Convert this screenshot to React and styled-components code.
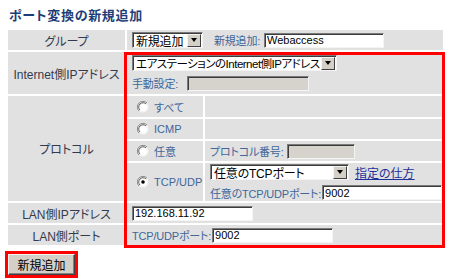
import React from 'react';
import styled, { createGlobalStyle } from 'styled-components';

const GlobalStyle = createGlobalStyle`
  body {
    margin: 0;
    background: #fff;
    font-family: "Liberation Sans", "Noto Sans CJK JP", sans-serif;
    font-feature-settings: "palt";
  }
`;

const Page = styled.div`
  padding: 8px 0 0 8px;
  width: 450px;
  height: 279px;
  box-sizing: border-box;
  overflow: hidden;
`;

const Title = styled.h1`
  margin: 0 0 6px 1px;
  font-size: 13px;
  line-height: 16px;
  font-weight: bold;
  letter-spacing: 0.7px;
  color: #1d3d78;
`;

const FormGrid = styled.div`
  display: grid;
  grid-template-columns: 117px 316px;
  grid-template-rows: 20px 42px 105px 20px 20px;
  gap: 2px;
`;

const Label = styled.div`
  grid-column: 1;
  grid-row: ${(p) => p.$row};
  background: #e1e1e1;
  display: flex;
  align-items: center;
  justify-content: center;
  font-size: 12px;
  color: #343b4c;
`;

const Cell = styled.div`
  grid-column: ${(p) => (p.$row ? 2 : 'auto')};
  grid-row: ${(p) => p.$row || 'auto'};
  background: #e1e1e1;
  display: flex;
  flex-direction: ${(p) => (p.$stack ? 'column' : 'row')};
  align-items: ${(p) => (p.$stack ? 'flex-start' : 'center')};
  justify-content: ${(p) => (p.$stack ? 'center' : 'flex-start')};
  gap: ${(p) => (p.$stack ? '4px' : '0')};
  padding: 0 4px 0 5px;
  font-size: 11px;
  color: #40669a;
`;

const Line = styled.div`
  display: flex;
  align-items: center;
`;

const Caption = styled.span`
  margin: ${(p) => p.$margin || '0'};
  white-space: nowrap;
  letter-spacing: -0.2px;
`;

const TextInput = styled.input`
  box-sizing: border-box;
  width: ${(p) => p.$w}px;
  height: 15px;
  padding: 0 2px;
  font-family: "Liberation Sans", "Noto Sans CJK JP", sans-serif;
  font-size: 11px;
  color: #000;
  background: ${(p) => (p.disabled ? '#d6d3cc' : '#fff')};
  border: 1px solid;
  border-color: #7a7a7a #f4f4f4 #f4f4f4 #7a7a7a;
  box-shadow: inset 1px 1px 0 #3c3c3c;
  margin: ${(p) => p.$margin || '0'};
  outline: none;
`;

const SelectBox = styled.div`
  box-sizing: border-box;
  width: ${(p) => p.$w}px;
  height: 16px;
  display: flex;
  align-items: center;
  background: #fff;
  border: 1px solid;
  border-color: #7a7a7a #f4f4f4 #f4f4f4 #7a7a7a;
  box-shadow: inset 1px 1px 0 #3c3c3c;
  padding: 1px 1px 1px 3px;
  font-size: ${(p) => p.$size || 12}px;
  color: #000;
`;

const SelectText = styled.span`
  flex: 1;
  white-space: nowrap;
  overflow: hidden;
  letter-spacing: ${(p) => p.$spacing || '-0.2px'};
`;

const ArrowButton = styled.span`
  box-sizing: border-box;
  flex: none;
  width: 14px;
  height: 13px;
  background: #d4d0c8;
  border: 1px solid;
  border-color: #f4f4f4 #404040 #404040 #f4f4f4;
  display: flex;
  align-items: center;
  justify-content: center;
  &::after {
    content: '';
    border-left: 3.5px solid transparent;
    border-right: 3.5px solid transparent;
    border-top: 4px solid #000;
  }
`;

const ProtocolGrid = styled.div`
  grid-column: 2;
  grid-row: 3;
  display: grid;
  grid-template-columns: 76px 238px;
  grid-template-rows: 21px 20px 20px 38px;
  gap: 2px;
`;

const RadioCell = styled.div`
  background: #e1e1e1;
  display: flex;
  align-items: center;
  gap: 5px;
  padding-left: 10px;
  font-size: 11px;
  color: #40669a;
`;

const LinkText = styled.a`
  margin-left: 6px;
  color: #1f2f9a;
  text-decoration: underline;
  font-size: 12px;
`;

const Highlight = styled.div`
  grid-column: 2;
  grid-row: 2 / 6;
  margin: 0 -2px -3px -3px;
  border: 3px solid #ff0000;
  pointer-events: none;
  z-index: 1;
`;

const ButtonFrame = styled.div`
  display: inline-flex;
  margin: 6px 0 0 -3px;
  border: 3px solid #ff0000;
`;

const SubmitButton = styled.button`
  box-sizing: border-box;
  width: 67px;
  height: 21px;
  padding: 0;
  background: #d4d0c8;
  border: 1px solid;
  border-color: #f4f4f4 #404040 #404040 #f4f4f4;
  box-shadow: inset -1px -1px 0 #808080;
  font-family: "Liberation Sans", "Noto Sans CJK JP", sans-serif;
  font-size: 12px;
  color: #000;
`;

function Radio({ checked }) {
  return (
    <svg width="12" height="12" viewBox="0 0 12 12">
      <circle cx="6" cy="6" r="5.5" fill="#f4f4f4" />
      <path d="M10 2 A5.5 5.5 0 0 0 2 10" fill="none" stroke="#8c8c8c" strokeWidth="1" />
      <path d="M9 3 A4.2 4.2 0 0 0 3 9" fill="none" stroke="#5a5a5a" strokeWidth="1" />
      <circle cx="6.3" cy="6.3" r="3.6" fill="#fff" />
      {checked && <circle cx="6" cy="6" r="1.8" fill="#000" />}
    </svg>
  );
}

function Select({ w, size, spacing, children }) {
  return (
    <SelectBox $w={w} $size={size}>
      <SelectText $spacing={spacing}>{children}</SelectText>
      <ArrowButton />
    </SelectBox>
  );
}

const protocols = [
  { label: 'すべて' },
  { label: 'ICMP' },
  { label: '任意' },
  { label: 'TCP/UDP', checked: true },
];

function App() {
  return (
    <>
      <GlobalStyle />
      <Page>
        <Title>ポート変換の新規追加</Title>
        <FormGrid>
          <Label $row={1}>グループ</Label>
          <Cell $row={1}>
            <Select w={71}>新規追加</Select>
            <Caption $margin="0 4px 0 11px">新規追加:</Caption>
            <TextInput $w={120} defaultValue="Webaccess" />
          </Cell>

          <Label $row={2}>Internet側IPアドレス</Label>
          <Cell $row={2} $stack>
            <Select w={205} size={11.5} spacing="-0.5px">
              エアステーションのInternet側IPアドレス
            </Select>
            <Line>
              <Caption $margin="0 9px 0 0">手動設定:</Caption>
              <TextInput $w={122} disabled />
            </Line>
          </Cell>

          <Label $row={3}>プロトコル</Label>
          <ProtocolGrid>
            {protocols.map((p, idx) => (
              <React.Fragment key={'proto' + idx}>
                <RadioCell>
                  <Radio checked={p.checked} />
                  <span>{p.label}</span>
                </RadioCell>
                {idx === 0 || idx === 1 ? (
                  <Cell />
                ) : idx === 2 ? (
                  <Cell>
                    <Caption $margin="0 3px 0 0">プロトコル番号:</Caption>
                    <TextInput $w={68} disabled />
                  </Cell>
                ) : (
                  <Cell $stack>
                    <Line>
                      <Select w={139}>任意のTCPポート</Select>
                      <LinkText href="#">指定の仕方</LinkText>
                    </Line>
                    <Line>
                      <Caption $margin="0 1px 0 0">任意のTCP/UDPポート:</Caption>
                      <TextInput $w={120} defaultValue="9002" />
                    </Line>
                  </Cell>
                )}
              </React.Fragment>
            ))}
          </ProtocolGrid>

          <Label $row={4}>LAN側IPアドレス</Label>
          <Cell $row={4}>
            <TextInput $w={121} defaultValue="192.168.11.92" />
          </Cell>

          <Label $row={5}>LAN側ポート</Label>
          <Cell $row={5}>
            <Caption $margin="0 1px 0 0">TCP/UDPポート:</Caption>
            <TextInput $w={121} defaultValue="9002" />
          </Cell>

          <Highlight />
        </FormGrid>
        <ButtonFrame>
          <SubmitButton>新規追加</SubmitButton>
        </ButtonFrame>
      </Page>
    </>
  );
}

export default App;
